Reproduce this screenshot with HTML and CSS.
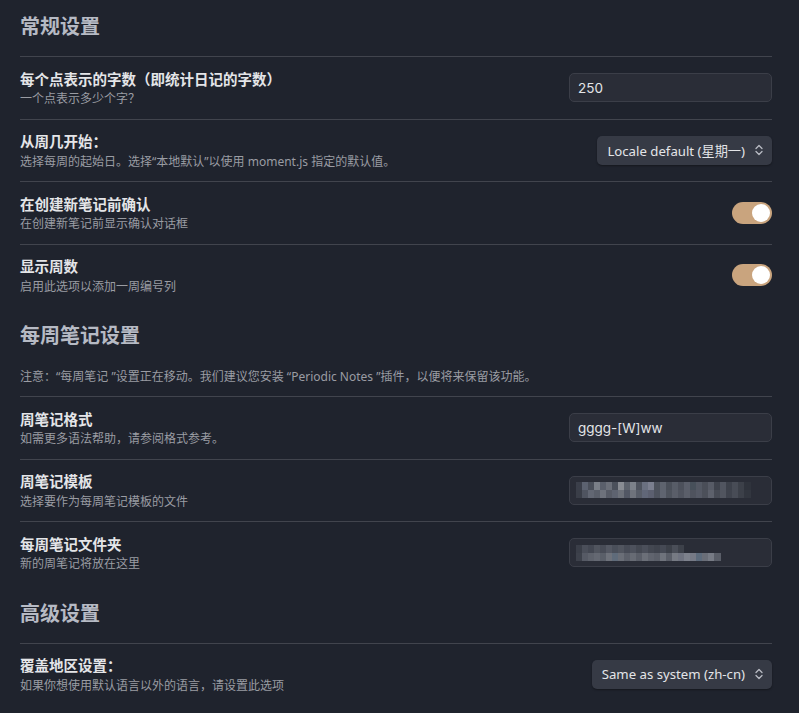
FILE: index.html
```html
<!DOCTYPE html>
<html lang="zh-CN">

<head>
    <meta charset="UTF-8">
    <title>日记设置</title>
    <link rel="stylesheet" href="styles.css">
</head>

<body>
    <div class="settings">
        <!-- 常规设置 -->
        <h2 class="group-title first">常规设置</h2>

        <div class="item">
            <div class="info">
                <div class="name">每个点表示的字数（即统计日记的字数）</div>
                <div class="desc">一个点表示多少个字？</div>
            </div>
            <div class="control"><div class="text-input">250</div></div>
        </div>

        <div class="item">
            <div class="info">
                <div class="name">从周几开始：</div>
                <div class="desc">选择每周的起始日。选择“本地默认”以使用 moment.js 指定的默认值。</div>
            </div>
            <div class="control">
                <div class="dropdown">Locale default (星期一)
                    <svg class="chevrons" width="10" height="14" viewBox="0 0 10 14"><path d="M2 5.5 5 2.5 8 5.5M2 8.5 5 11.5 8 8.5" fill="none" stroke="#b9bcc4" stroke-width="1.3" stroke-linecap="round" stroke-linejoin="round"/></svg>
                </div>
            </div>
        </div>

        <div class="item">
            <div class="info">
                <div class="name">在创建新笔记前确认</div>
                <div class="desc">在创建新笔记前显示确认对话框</div>
            </div>
            <div class="control"><div class="toggle on"></div></div>
        </div>

        <div class="item">
            <div class="info">
                <div class="name">显示周数</div>
                <div class="desc">启用此选项以添加一周编号列</div>
            </div>
            <div class="control"><div class="toggle on"></div></div>
        </div>

        <!-- 每周笔记设置 -->
        <h2 class="group-title">每周笔记设置</h2>

        <div class="item note">
            <div class="desc">注意：“每周笔记 ”设置正在移动。我们建议您安装 “Periodic Notes ”插件，以便将来保留该功能。</div>
        </div>

        <div class="item">
            <div class="info">
                <div class="name">周笔记格式</div>
                <div class="desc">如需更多语法帮助，请参阅格式参考。</div>
            </div>
            <div class="control"><div class="text-input">gggg-[W]ww</div></div>
        </div>

        <div class="item">
            <div class="info">
                <div class="name">周笔记模板</div>
                <div class="desc">选择要作为每周笔记模板的文件</div>
            </div>
            <div class="control"><div class="text-input"><div class="blur blur-long"></div></div></div>
        </div>

        <div class="item">
            <div class="info">
                <div class="name">每周笔记文件夹</div>
                <div class="desc">新的周笔记将放在这里</div>
            </div>
            <div class="control"><div class="text-input"><div class="blur blur-short"></div></div></div>
        </div>

        <!-- 高级设置 -->
        <h2 class="group-title">高级设置</h2>

        <div class="item">
            <div class="info">
                <div class="name">覆盖地区设置：</div>
                <div class="desc">如果你想使用默认语言以外的语言，请设置此选项</div>
            </div>
            <div class="control">
                <div class="dropdown">Same as system (zh-cn)
                    <svg class="chevrons" width="10" height="14" viewBox="0 0 10 14"><path d="M2 5.5 5 2.5 8 5.5M2 8.5 5 11.5 8 8.5" fill="none" stroke="#b9bcc4" stroke-width="1.3" stroke-linecap="round" stroke-linejoin="round"/></svg>
                </div>
            </div>
        </div>
    </div>
</body>

</html>
```

FILE: styles.css
```css
/* 기본 리셋 */
* {
    margin: 0;
    padding: 0;
    box-sizing: border-box;
}

body {
    background-color: #1f232d;
    font-family: "Noto Sans", "Noto Sans CJK SC", sans-serif;
    color: #dcdde0;
}

.settings {
    padding: 0 27px 0 20px;
}

/* 그룹 제목 */
.group-title {
    font-family: "Noto Sans CJK SC", sans-serif;
    font-size: 20px;
    font-weight: 700;
    line-height: 26px;
    height: 26px;
    color: #b6bac4;
    margin-top: 16px;
    margin-bottom: 17px;
}

.group-title.first {
    margin-top: 13px;
}

/* 설정 항목 */
.item {
    display: flex;
    align-items: center;
    justify-content: space-between;
    border-top: 1px solid #41444d;
    padding: 11.5px 0 11.5px;
    min-height: 62.5px;
}

.item.note {
    border-top: none;
    min-height: 0;
    padding: 1px 0 11.5px;
}

.info {
    display: flex;
    flex-direction: column;
}

.name {
    font-family: "Noto Sans CJK SC", sans-serif;
    font-size: 14.5px;
    font-weight: 700;
    line-height: 20px;
    height: 20px;
    color: #e4e5e8;
}

.desc {
    font-family: "Noto Sans", "Noto Sans CJK SC", sans-serif;
    font-size: 12px;
    line-height: 17px;
    height: 17px;
    margin-top: 1.5px;
    color: #9a9ca3;
    white-space: nowrap;
}

.control {
    flex-shrink: 0;
}

/* 입력창 */
.text-input {
    width: 203px;
    height: 29px;
    border: 1px solid #3b3e48;
    border-radius: 5px;
    background-color: #2a2d37;
    padding: 0 8px;
    display: flex;
    align-items: center;
    font-family: "Inter", "Noto Sans", sans-serif;
    font-size: 13.5px;
    color: #e4e5e8;
}

/* 흐림 처리된 경로 */
.blur {
    height: 16px;
    background:
        linear-gradient(90deg, #3b3f4a 0 6px, #5c6270 6px 12px, #4a4f5a 12px 18px, #7a7f88 18px 24px, #5a5f6b 24px 30px, #6b6f79 30px 36px, #4b505b 36px 42px, #898c93 42px 48px, #5d626c 48px 54px, #7c818a 54px 60px, #4e535e 60px 66px, #6a7080 66px 72px, #7b7f8f 72px 78px, #4d525c 78px 84px, #5e636e 84px 90px, #4a4f59 90px 96px, #575c67 96px 102px, #4c505b 102px 108px, #5a5e6a 108px 114px, #47505a 114px 120px, #535863 120px 126px, #4a4e58 126px 132px, #575b66 132px 138px, #3f434d 138px 144px, #515560 144px 150px, #3d414b 150px 156px, #484c56 156px 162px, #3c4049 162px 168px, #2f333c 168px 175px, #2a2d37 175px) top / 100% 50% no-repeat,
        linear-gradient(90deg, #3a3e48 0 6px, #4f5460 6px 12px, #626773 12px 18px, #5a5f6a 18px 24px, #6e727c 24px 30px, #575b66 30px 36px, #5e6370 36px 42px, #6c7079 42px 48px, #525764 48px 54px, #6f737c 54px 60px, #585d68 60px 66px, #616778 66px 72px, #5c6070 72px 78px, #4e535e 78px 84px, #5f6470 84px 90px, #4e535d 90px 96px, #5a5e69 96px 102px, #50545f 102px 108px, #5b5f6a 108px 114px, #4f535e 114px 120px, #555965 120px 126px, #4c505a 126px 132px, #5d616c 132px 138px, #474b55 138px 144px, #51555f 144px 150px, #3f434d 150px 156px, #484c56 156px 162px, #3c4049 162px 168px, #32363f 168px 175px, #2a2d37 175px) bottom / 100% 50% no-repeat;
}

.blur-long {
    width: 195px;
    margin-left: -2px;
}

.blur-short {
    width: 145px;
    margin-left: -2px;
    background:
        linear-gradient(90deg, #3a3e48 0 6px, #4a4e59 6px 12px, #434752 12px 18px, #50545e 18px 24px, #484c57 24px 30px, #545863 30px 36px, #4a4f5a 36px 42px, #51555f 42px 48px, #474b56 48px 54px, #4d515c 54px 60px, #444852 60px 66px, #4b4f5a 66px 72px, #434751 72px 78px, #3f434d 78px 84px, #454954 84px 90px, #3c4049 90px 96px, #4a4e58 96px 102px, #3d414a 102px 108px, #2a2d37 108px) top / 100% 50% no-repeat,
        linear-gradient(90deg, #3d414b 0 6px, #565a65 6px 12px, #5e626c 12px 18px, #646872 18px 24px, #5a5f69 24px 30px, #6e727b 30px 36px, #5f6b7a 36px 42px, #6a6e77 42px 48px, #5c606a 48px 54px, #676b74 54px 60px, #5a5e68 60px 66px, #6b6f78 66px 72px, #60646e 72px 78px, #5b5f69 78px 84px, #6f737c 84px 90px, #5a5e68 90px 96px, #767a83 96px 102px, #6f7380 102px 108px, #7d818c 108px 114px, #767a86 114px 120px, #5d6b7c 120px 126px, #6a6e78 126px 132px, #777b85 132px 138px, #5a5e68 138px 145px) bottom / 100% 50% no-repeat;
}

/* 드롭다운 */
.dropdown {
    display: flex;
    align-items: center;
    gap: 9px;
    height: 29px;
    padding: 0 8px 0 10px;
    border-radius: 5px;
    background-color: #363a45;
    box-shadow: 0 1px 2px rgba(0, 0, 0, 0.35);
    font-family: "Noto Sans", "Noto Sans CJK SC", sans-serif;
    font-size: 13.2px;
    color: #e4e5e8;
    white-space: nowrap;
}

.chevrons {
    flex-shrink: 0;
}

/* 토글 */
.toggle {
    position: relative;
    width: 40px;
    height: 22px;
    border-radius: 11px;
    background-color: #c9a47e;
}

.toggle::after {
    content: "";
    position: absolute;
    top: 2px;
    right: 2px;
    width: 18px;
    height: 18px;
    border-radius: 50%;
    background-color: #ffffff;
}
```
